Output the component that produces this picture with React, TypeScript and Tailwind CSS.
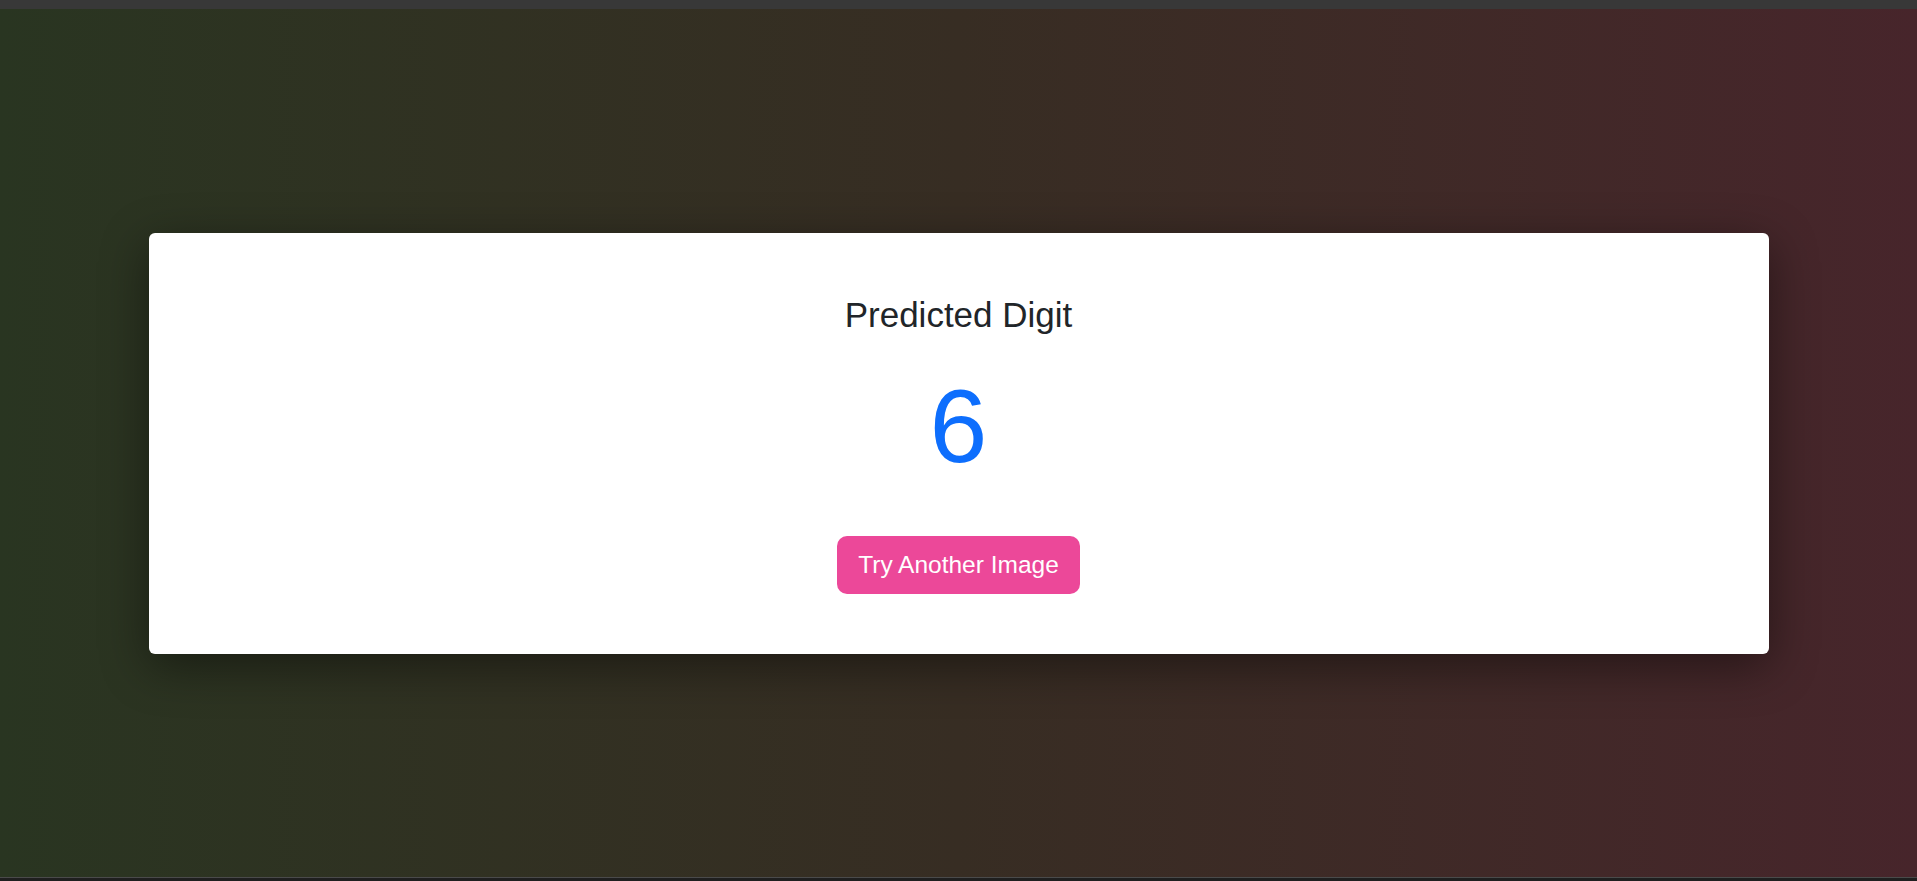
import React from "react";

// Carta con el resultado de la predicción
const ResultCard = ({ digit = 6 }: { digit?: number }) => (
  <div className="w-[1620px] bg-white rounded-md shadow-[0_12px_48px_rgba(0,0,0,0.45)] flex flex-col items-center pt-[61px] pb-[60px]">
    <h2 className="text-[35px] leading-[42px] text-[#212529] font-normal">Predicted Digit</h2>
    <div className="mt-[28px] text-[104px] leading-[125px] text-[#0d6efd]">{digit}</div>
    <button className="mt-[47px] bg-[#ec4899] text-white text-[24.5px] leading-[36px] px-[21px] py-[11px] rounded-[10px]">
      Try Another Image
    </button>
  </div>
);

export default function App() {
  return (
    <div
      className="h-[881px] w-full flex flex-col overflow-hidden"
      style={{ fontFamily: '"Liberation Sans", Arial, sans-serif' }}
    >
      <div className="h-[9px] bg-[#383838] shrink-0" />
      <main className="flex-1 flex items-center justify-center bg-gradient-to-r from-[#293521] via-[#372d23] to-[#47252b]">
        <ResultCard digit={6} />
      </main>
      <div className="h-px bg-[#4a4a4a] shrink-0" />
      <div className="h-[3px] bg-[#1f1f1f] shrink-0" />
    </div>
  );
}
